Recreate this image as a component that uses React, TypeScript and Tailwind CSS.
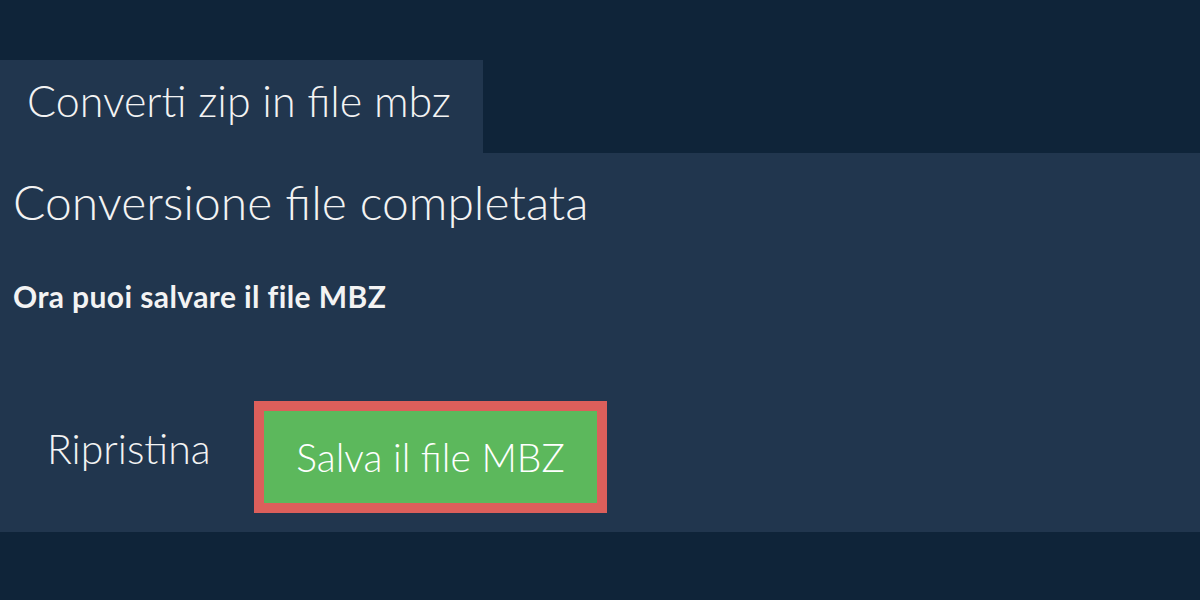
export default function App() {
  return (
    <div className="w-[1200px] h-[600px] bg-[#0f2439] pt-[60px] text-[#f3f3f3]" style={{ fontFamily: "Lato, 'Noto Sans', sans-serif" }}>
      <div className="w-[483px] h-[93px] bg-[#21364e] pl-[27px] pt-[19px]">
        <div className="text-[43px] font-light leading-none">Converti zip in file mbz</div>
      </div>
      <div className="h-[379px] bg-[#21364e] px-[13px] pt-[25px]">
        <h1 className="text-[48px] font-light leading-none">Conversione file completata</h1>
        <p className="mt-[55px] text-[30px] font-bold leading-none tracking-[0.4px]">Ora puoi salvare il file MBZ</p>
        <div className="mt-[90px] flex items-start pl-[34px]">
          <div className="w-[207px] mt-[27px]">
            <button className="text-[41px] font-light leading-none">Ripristina</button>
          </div>
          <button className="w-[353px] h-[112px] border-[10px] border-[#dc5f5b] bg-[#5cb85c] text-[39px] font-light leading-none text-white">Salva il file MBZ</button>
        </div>
      </div>
    </div>
  );
}
